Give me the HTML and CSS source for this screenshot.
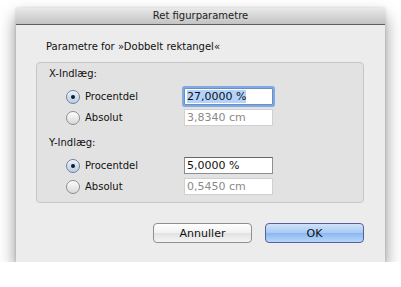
FILE: index.html
```html
<!DOCTYPE html>
<html lang="da">
<head>
  <meta charset="UTF-8" />
  <title>Ret figurparametre</title>
  <link rel="stylesheet" href="styles.css">
</head>
<body>
  <div class="window">
    <div class="titlebar">Ret figurparametre</div>

    <div class="content">
      <div class="group-title">Parametre for »Dobbelt rektangel«</div>

      <div class="group">
        <div class="section-label">X-Indlæg:</div>
        <div class="option-row">
          <div class="radio checked"><span class="circle"></span>Procentdel</div>
          <div class="field focused"><span class="selected">27,0000 %</span></div>
        </div>
        <div class="option-row">
          <div class="radio"><span class="circle"></span>Absolut</div>
          <div class="field disabled">3,8340 cm</div>
        </div>

        <div class="section-label second">Y-Indlæg:</div>
        <div class="option-row">
          <div class="radio checked"><span class="circle"></span>Procentdel</div>
          <div class="field">5,0000 %</div>
        </div>
        <div class="option-row">
          <div class="radio"><span class="circle"></span>Absolut</div>
          <div class="field disabled">0,5450 cm</div>
        </div>
      </div>

      <div class="buttons">
        <button class="btn">Annuller</button>
        <button class="btn default">OK</button>
      </div>
    </div>
  </div>
</body>
</html>
```

FILE: styles.css
```css
body {
  margin: 0;
  padding: 8px 0 0 16px;
  background-color: #fff;
  font-family: 'DejaVu Sans', sans-serif;
  font-size: 10px;
  color: #111;
}
.window {
  width: 369px;
  height: 254px;
  background-color: #ececec;
  box-shadow: 0 9px 16px rgba(0, 0, 0, 0.45), 0 0 3px rgba(0, 0, 0, 0.15);
  display: flex;
  flex-direction: column;
}
.titlebar {
  height: 16px;
  line-height: 16px;
  text-align: center;
  color: #222;
  background: linear-gradient(#e9e9e9, #c3c3c3);
  border-bottom: 1px solid #5c5c5c;
}
.content {
  padding: 15px 21px 0 20px;
}
.group-title {
  line-height: 13px;
  margin-left: 10px;
  margin-bottom: 9px;
}
.group {
  background-color: #e2e2e2;
  border: 1px solid #c6c6c6;
  border-radius: 4px;
  padding: 4px 12px 7px 12px;
}
.section-label {
  line-height: 13px;
  margin-bottom: 8px;
}
.section-label.second {
  margin-top: 10px;
}
.option-row {
  display: flex;
  align-items: center;
  height: 17px;
  padding-left: 17px;
}
.option-row + .option-row {
  margin-top: 4px;
}
.radio {
  width: 118px;
  display: flex;
  align-items: center;
  gap: 5px;
}
.circle {
  width: 12px;
  height: 12px;
  border-radius: 50%;
  border: 1px solid #8c8c8c;
  background: linear-gradient(#fdfdfd, #d8d8d8);
  box-shadow: inset 0 1px 1px rgba(255, 255, 255, 0.9);
  position: relative;
}
.radio.checked .circle {
  border-color: #6f7f95;
  background: linear-gradient(#e4eefb, #b9cfe9);
}
.radio.checked .circle::after {
  content: '';
  position: absolute;
  left: 4px;
  top: 4px;
  width: 4px;
  height: 4px;
  border-radius: 50%;
  background-color: #1a1a1a;
}
.field {
  width: 85px;
  height: 15px;
  line-height: 15px;
  padding: 0 0 0 2px;
  font-size: 11px;
  background-color: #fff;
  border: 1px solid #8e8e8e;
  border-top-color: #666;
}
.field.disabled {
  color: #8a8a8a;
  border-color: #d0d0d0;
}
.field.focused {
  border-color: #6a8fc4;
  box-shadow: 0 0 0 2px #7fa9e3;
  border-radius: 1px;
}
.selected {
  background-color: #b4d3fb;
}
.buttons {
  display: flex;
  justify-content: flex-end;
  gap: 13px;
  margin-top: 20px;
}
.btn {
  width: 99px;
  height: 20px;
  padding: 0;
  font-family: 'DejaVu Sans', sans-serif;
  font-size: 11px;
  color: #111;
  border: 1px solid #8f8f8f;
  border-radius: 4px;
  background: linear-gradient(#ffffff, #f1f1f1 50%, #e2e2e2 51%, #f4f4f4);
}
.btn.default {
  border-color: #5a5f9a;
  background: linear-gradient(#cfe2fa, #a9c9f3 50%, #8ab7f0 51%, #b7d7fb);
}
```
